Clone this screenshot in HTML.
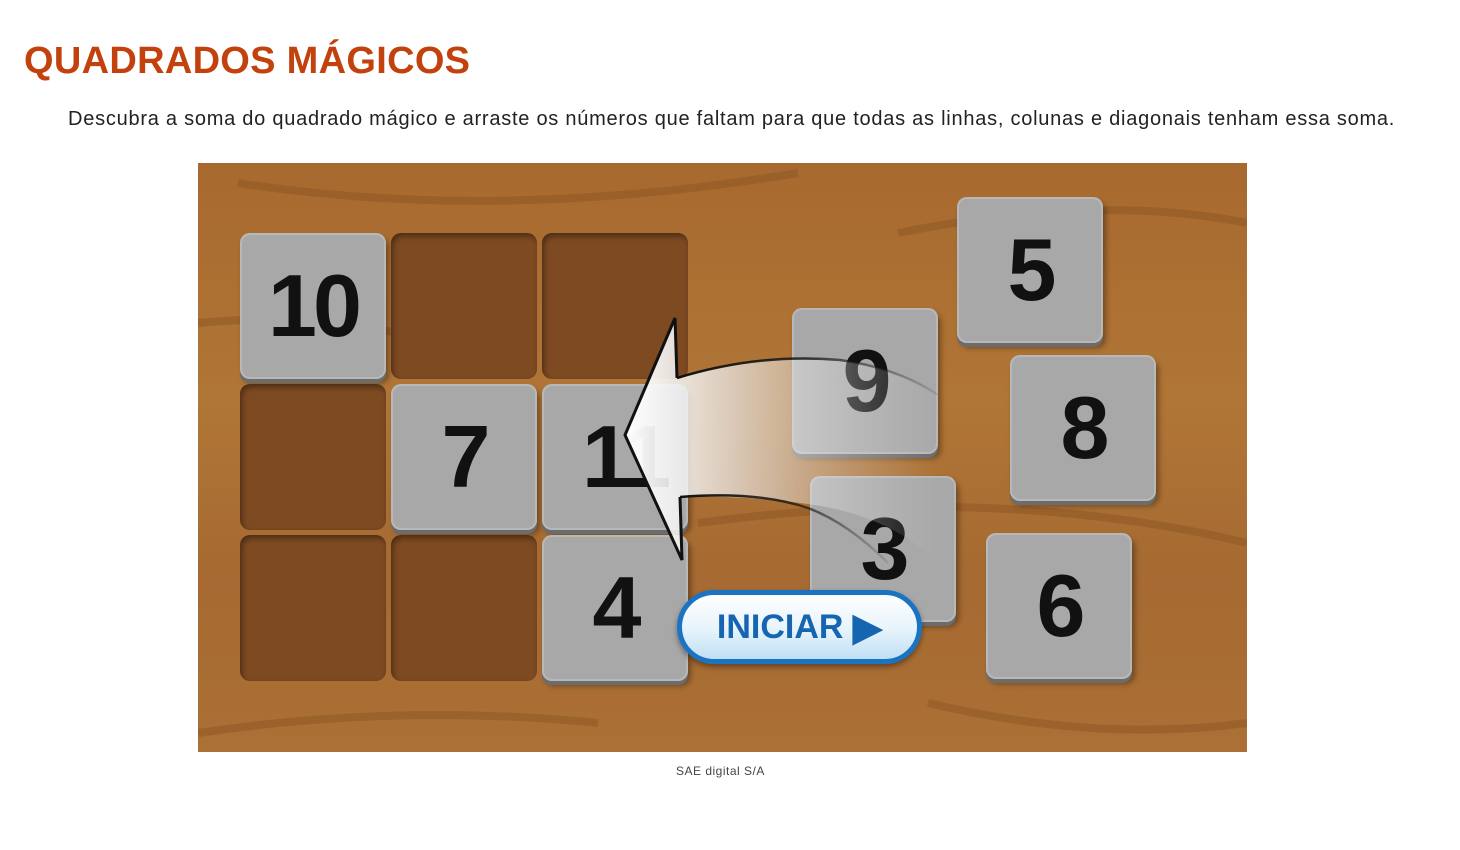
<!DOCTYPE html><html><head><style>
body{margin:0;width:1460px;height:850px;background:#fff;position:relative;font-family:"Liberation Sans",sans-serif;overflow:hidden}
h1{position:absolute;left:24px;top:40px;margin:0;font-size:38px;font-weight:bold;color:#c2410c;letter-spacing:0.3px}
.p{position:absolute;left:68px;top:108px;font-size:20px;color:#222;letter-spacing:0.75px}
.game{position:absolute;left:198px;top:163px;width:1049px;height:589px;background:linear-gradient(180deg,#a8692f,#b07636 40%,#a66a32 70%,#ab7035);overflow:hidden}
.t{position:absolute;width:146px;height:146px;border-radius:10px;background:#a8a8a8;box-shadow:inset 0 0 0 2px #b8b8b8,0 4px 0 #6c6c6c,3px 5px 6px rgba(0,0,0,.35);font-weight:bold;font-size:88px;color:#111;display:flex;align-items:center;justify-content:center;letter-spacing:-4px}
.e{position:absolute;width:146px;height:146px;border-radius:10px;background:#7d4a22;box-shadow:inset 2px 3px 6px rgba(0,0,0,.4)}
.cap{position:absolute;top:764px;left:676px;font-size:12px;color:#444;letter-spacing:0.5px}
.btn{position:absolute;left:479px;top:427px;width:245px;height:74px;border-radius:37px;background:linear-gradient(#fff,#e6f3fb 55%,#bfe0f4);border:5px solid #1b74c2;box-sizing:border-box;box-shadow:0 3px 6px rgba(0,0,0,.4);font-weight:bold;font-size:34px;color:#1565b0;display:flex;align-items:center;justify-content:center}
</style></head><body>
<h1>QUADRADOS MÁGICOS</h1>
<div class="p">Descubra a soma do quadrado mágico e arraste os números que faltam para que todas as linhas, colunas e diagonais tenham essa soma.</div>
<div class="game">
<svg width="1049" height="589" style="position:absolute;left:0;top:0" fill="none" stroke="#925a26" stroke-width="8" opacity=".6">
<path d="M40 20 Q300 60 600 10"/><path d="M700 70 Q900 30 1049 60"/><path d="M0 160 Q100 150 200 170"/><path d="M500 360 Q800 320 1049 380"/><path d="M730 540 Q900 580 1049 560"/><path d="M0 570 Q200 540 400 560"/>
</svg>
<div class="t" style="left:42px;top:70px">10</div>
<div class="e" style="left:193px;top:70px"></div>
<div class="e" style="left:344px;top:70px"></div>
<div class="e" style="left:42px;top:221px"></div>
<div class="t" style="left:193px;top:221px">7</div>
<div class="t" style="left:344px;top:221px;justify-content:flex-start;padding-left:40px;box-sizing:border-box">11</div>
<div class="e" style="left:42px;top:372px"></div>
<div class="e" style="left:193px;top:372px"></div>
<div class="t" style="left:344px;top:372px">4</div>
<div class="t" style="left:759px;top:34px">5</div>
<div class="t" style="left:594px;top:145px">9</div>
<div class="t" style="left:812px;top:192px">8</div>
<div class="t" style="left:612px;top:313px">3</div>
<div class="t" style="left:788px;top:370px">6</div>
<svg width="1049" height="589" style="position:absolute;left:0;top:0">
<defs><linearGradient id="g" x1="0" x2="1"><stop offset="0" stop-color="#fff" stop-opacity="1"/><stop offset=".3" stop-color="#eee" stop-opacity=".75"/><stop offset="1" stop-color="#ddd" stop-opacity="0"/></linearGradient>
<linearGradient id="s" x1="0" x2="1"><stop offset="0" stop-color="#111"/><stop offset=".5" stop-color="#111" stop-opacity=".8"/><stop offset="1" stop-color="#111" stop-opacity=".1"/></linearGradient></defs>
<path d="M477 155 L479 215 Q560 190 642 197 Q700 205 740 232 L740 400 Q690 350 602 340 Q540 332 482 334 L484 397 L427 272 Z" fill="url(#g)"/>
<path d="M479 215 L477 155 L427 272 L484 397 L482 334" fill="none" stroke="#111" stroke-width="3" stroke-linejoin="miter"/>
<path d="M479 215 Q560 190 642 197 Q700 205 740 232" fill="none" stroke="url(#s)" stroke-width="2.5"/>
<path d="M482 334 Q560 328 610 345 Q650 360 690 400" fill="none" stroke="url(#s)" stroke-width="2.5"/>
</svg>
<div class="btn">INICIAR&nbsp;<span style="font-size:38px">▶</span></div>
</div>
<div class="cap">SAE digital S/A</div>
</body></html>
